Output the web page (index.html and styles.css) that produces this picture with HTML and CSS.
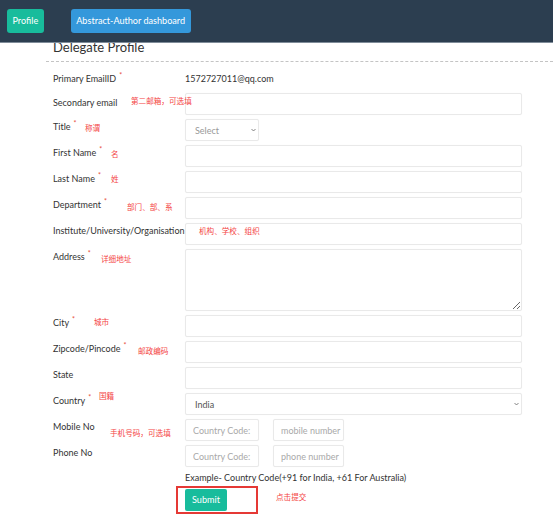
FILE: index.html
```html
<!DOCTYPE html>
<html lang="en">
<head>
<meta charset="utf-8">
<title>Delegate Profile</title>
<link rel="stylesheet" href="styles.css">
</head>
<body>
<header class="navbar">
  <button class="btn btn-success" type="button">Profile</button>
  <button class="btn btn-info" type="button">Abstract-Author dashboard</button>
</header>
<main class="page">
  <h1 class="title">Delegate Profile</h1>
  <form class="form">
    <div class="row row-center">
      <label class="lbl">Primary EmailID<sup class="req">*</sup></label>
      <div class="value">1572727011@qq.com</div>
    </div>
    <div class="row">
      <label class="lbl lbl-low">Secondary email<span class="note" style="left:78px;top:3px">第二邮箱，可选填</span></label>
      <input class="input" type="text">
    </div>
    <div class="row">
      <label class="lbl">Title<sup class="req">*</sup><span class="note" style="left:32px;top:4px">称谓</span></label>
      <span class="select-wrap select-small">
        <select class="input select muted"><option>Select</option></select>
        <svg class="chev" width="5" height="4" viewBox="0 0 5 4"><polyline points="0.5,1 2.5,3 4.5,1" fill="none" stroke="#666" stroke-width="0.8"/></svg>
      </span>
    </div>
    <div class="row">
      <label class="lbl">First Name<sup class="req">*</sup><span class="note" style="left:58px;top:4px">名</span></label>
      <input class="input" type="text">
    </div>
    <div class="row">
      <label class="lbl">Last Name<sup class="req">*</sup><span class="note" style="left:58px;top:3px">姓</span></label>
      <input class="input" type="text">
    </div>
    <div class="row">
      <label class="lbl">Department<sup class="req">*</sup><span class="note" style="left:74px;top:5px">部门、部、系</span></label>
      <input class="input" type="text">
    </div>
    <div class="row">
      <label class="lbl">Institute/University/Organisation<span class="note" style="left:146px;top:3px">机构、学校、组织</span></label>
      <input class="input" type="text">
    </div>
    <div class="row row-tall">
      <label class="lbl">Address<sup class="req">*</sup><span class="note" style="left:48px;top:5px">详细地址</span></label>
      <textarea class="input textarea"></textarea>
    </div>
    <div class="row">
      <label class="lbl">City<sup class="req">*</sup><span class="note" style="left:41px;top:2px">城市</span></label>
      <input class="input" type="text">
    </div>
    <div class="row">
      <label class="lbl">Zipcode/Pincode<sup class="req">*</sup><span class="note" style="left:85px;top:5px">邮政编码</span></label>
      <input class="input" type="text">
    </div>
    <div class="row">
      <label class="lbl">State</label>
      <input class="input" type="text">
    </div>
    <div class="row">
      <label class="lbl">Country<sup class="req">*</sup><span class="note" style="left:46px;top:-2px">国籍</span></label>
      <span class="select-wrap select-full">
        <select class="input select"><option>India</option></select>
        <svg class="chev" width="5" height="4" viewBox="0 0 5 4"><polyline points="0.5,1 2.5,3 4.5,1" fill="none" stroke="#666" stroke-width="0.8"/></svg>
      </span>
    </div>
    <div class="row">
      <label class="lbl">Mobile No<span class="note" style="left:57px;top:9px">手机号码，可选填</span></label>
      <div class="phone">
        <input class="input code" type="text" placeholder="Country Code:">
        <input class="input num" type="text" placeholder="mobile number">
      </div>
    </div>
    <div class="row">
      <label class="lbl">Phone No</label>
      <div class="phone">
        <input class="input code" type="text" placeholder="Country Code:">
        <input class="input num" type="text" placeholder="phone number">
      </div>
    </div>
    <p class="hint">Example- Country Code(+91 for India, +61 For Australia)</p>
    <div class="actions">
      <span class="submit-wrap">
        <button class="btn btn-success submit" type="submit">Submit</button>
        <span class="mark"></span>
        <span class="note note-submit">点击提交</span>
      </span>
    </div>
  </form>
</main>
</body>
</html>
```
FILE: styles.css
```css
body {
  margin: 0;
  background: #fff;
  color: #333;
  font-family: Lato, "Noto Sans CJK SC", sans-serif;
  font-size: 9px;
}

.navbar {
  position: fixed;
  top: 0;
  left: 0;
  right: 0;
  height: 33px;
  padding: 9px 0 0 7px;
  background: #2c3e50;
  border-bottom: 1px solid #7f8c99;
  display: flex;
  align-items: flex-start;
  gap: 27px;
  z-index: 10;
}

.btn {
  height: 24px;
  padding: 0 5.5px;
  border: none;
  border-radius: 3px;
  color: #fff;
  font-family: Lato, sans-serif;
  font-size: 9.1px;
  line-height: 24px;
  cursor: pointer;
}

.btn-success { background: #18bc9c; }
.btn-info { background: #3498db; }

.page {
  margin-left: 46px;
  padding-top: 39px;
}

.title {
  margin: 0;
  padding: 0 0 6px 7px;
  font-size: 13px;
  font-weight: 400;
  line-height: 16px;
  color: #333;
}

.form {
  border-top: 1px dashed #c4c4c4;
  padding: 5px 0 20px 7px;
  margin: 0;
}

.row {
  display: flex;
  align-items: flex-start;
  height: 22px;
  margin-bottom: 4px;
}

.row-center { align-items: center; }
.row-tall { height: 62px; }

.lbl {
  position: relative;
  flex: 0 0 132px;
  min-width: 0;
  line-height: 15px;
  white-space: nowrap;
  color: #333;
}

.lbl-low { padding-top: 2px; }

.req {
  color: #e74c3c;
  font-size: 7px;
  margin-left: 3px;
  vertical-align: 4px;
  line-height: 0;
}

.note {
  position: absolute;
  color: #f44444;
  font-size: 7.6px;
  line-height: 10px;
  white-space: nowrap;
  font-family: "Noto Sans CJK SC", sans-serif;
}

.value {
  line-height: 15px;
}

.input {
  box-sizing: border-box;
  width: 337px;
  height: 22px;
  margin: 0;
  padding: 0 8px;
  border: 1px solid #e9e9e9;
  border-radius: 2px;
  background: #fff;
  box-shadow: 0 0 1px rgba(0, 0, 0, 0.06);
  font-family: Lato, sans-serif;
  font-size: 9px;
  color: #555;
  outline: none;
}

.input::placeholder { color: #a9a9a9; }

.textarea {
  height: 62px;
  resize: vertical;
}

.select-wrap {
  position: relative;
  display: inline-block;
}

.select {
  appearance: none;
  -webkit-appearance: none;
  padding-left: 9px;
  width: 100%;
}

.muted { color: #999; }

.select-small { width: 74px; }
.select-full { width: 337px; }

.chev {
  position: absolute;
  right: 3px;
  top: 9px;
}

.phone {
  display: flex;
  gap: 14px;
}

.code { width: 74px; padding: 0 0 0 7px; }
.num { width: 71px; padding: 0 0 0 7px; }

.hint {
  margin: 0 0 4px 132px;
  line-height: 14px;
  color: #333;
}

.actions {
  padding-left: 132px;
  height: 22px;
}

.submit-wrap {
  position: relative;
  display: inline-block;
}

.submit {
  height: 22px;
  width: 42px;
  padding: 0;
  border-radius: 2px;
  line-height: 22px;
  display: block;
}

.mark {
  position: absolute;
  left: -9px;
  top: -3px;
  width: 78px;
  height: 24px;
  border: 2px solid #e53935;
}

.note-submit {
  left: 91px;
  top: 3px;
}
```
